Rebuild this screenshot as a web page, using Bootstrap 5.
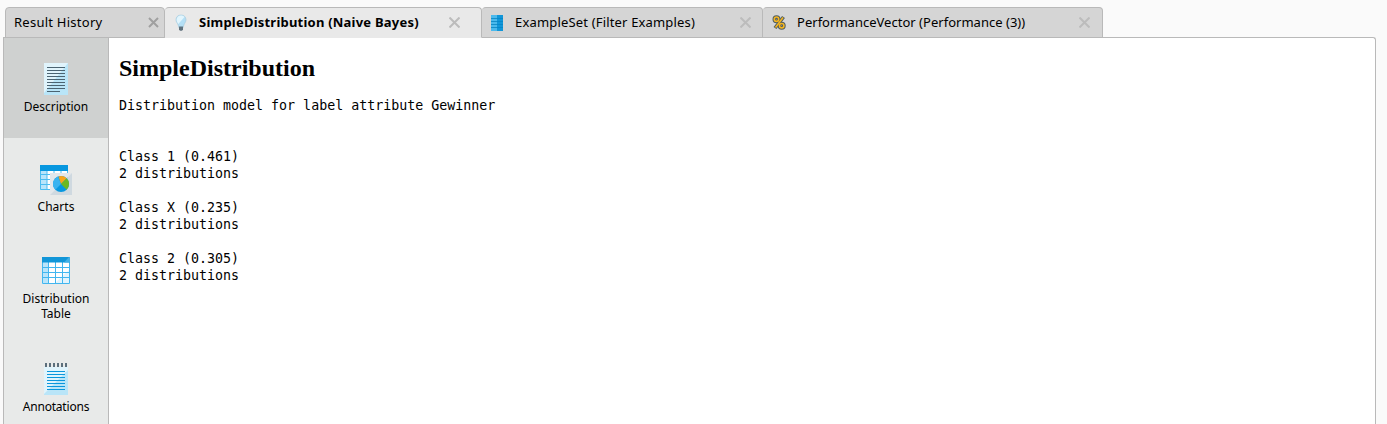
<!DOCTYPE html>
<html lang="en">
<head>
<meta charset="utf-8">
<meta name="viewport" content="width=device-width, initial-scale=1">
<title>Results</title>
<link rel="stylesheet" href="https://cdn.jsdelivr.net/npm/bootstrap@5.3.0/dist/css/bootstrap.min.css">
<style>
body{background:#fafafa;color:#000;font-family:"Noto Sans","Open Sans",sans-serif;font-size:12px;height:424px;overflow:hidden}
svg{display:block;flex:none}
.tabs{padding:7px 0 0 5px;height:37px}
.result-tab{height:31px;border:1px solid #b9b9b9;border-left-width:0;border-radius:4px 4px 0 0;background:#d5d5d5;font-size:13px;line-height:26px;white-space:nowrap;position:relative}
.result-tab span{padding-bottom:2px}
.result-tab:first-child{border-left-width:1px}
.result-tab.active{background:#e9e9e9;border-bottom-color:#e9e9e9;font-weight:700;letter-spacing:.22px}
.t1{width:160px;padding:0 5px 0 8px;letter-spacing:.25px}
.t2{width:317px;padding:0 21px 0 9px}
.t3{width:281px;padding:0 11px 0 9px;letter-spacing:.17px}
.t4{width:340px;padding:0 12px 0 9px;letter-spacing:.02px}
.x{stroke:#a0a0a0;stroke-width:2;fill:none}
.x.dim{stroke:#bcbcbc}
.panel{margin-left:3px;width:1373px;height:387px;border:1px solid #b9b9b9;border-bottom:0;border-radius:0 3px 0 0;background:#fff}
.side{width:105px;background:#e8eae9;border-right:1px solid #b9b9b9;line-height:15px;text-align:center}
.side-item{padding-top:25px;height:100px}
.side-item.active{background:#cfd1d0}
.side-item svg{margin:0 auto 4px}
.side-item span{display:block}
.doc{padding:16px 0 0 10px}
.doc h1{font:700 24px/28px "Liberation Serif",serif;margin:0 0 15px}
.doc pre{font:13.3px/17px "DejaVu Sans Mono",monospace;margin:0;overflow:visible;color:#000}
</style>
</head>
<body>
<nav class="tabs d-flex" aria-label="Results">
  <div class="result-tab t1 d-flex align-items-center justify-content-between">
    <span>Result History</span>
    <svg width="11" height="11"><path class="x" d="M1 1L10 10M10 1L1 10"/></svg>
  </div>
  <div class="result-tab t2 active d-flex align-items-center">
    <svg width="16" height="18" viewBox="0 0 16 18"><path d="M7 1C3.800 1 2 3.200 2 5.800c0 2 1.300 3.200 2.200 5.200L4.800 13.500h4.400l.6-2.500c.9-2 2.200-3.200 2.200-5.200C12 3.200 10.200 1 7 1z" fill="#b4dff5" stroke="#a8cbdd" stroke-width=".7"/><path d="M7 1.500C4.300 1.500 2.600 3.500 2.600 5.800c0 1.500 1 2.800 1.700 4.200L10.500 3C9.600 2 8.500 1.500 7 1.500z" fill="#e2f5fd"/><path d="M5 12.500h4v3l-1 1.200H6L5 15.500z" fill="#60727e"/></svg>
    <span class="me-auto" style="margin-left:9px">SimpleDistribution (Naive Bayes)</span>
    <svg width="11" height="11"><path class="x dim" d="M.5 .5L10.500 10.500M10.500 .5L.5 10.500"/></svg>
  </div>
  <div class="result-tab t3 d-flex align-items-center">
    <svg width="12" height="16"><path fill="#4bb9ec" d="M0 0h6v16H0z"/><path fill="#1196d8" d="M6 0h6v16H6z"/><path d="M0 3.500h6M0 6.500h6M0 9.500h6M0 12.500h6" stroke="#168fc9"/><path d="M6 3.500h6M6 6.500h6M6 9.500h6M6 12.500h6" stroke="#0788ca"/></svg>
    <span class="me-auto" style="margin-left:12px">ExampleSet (Filter Examples)</span>
    <svg width="11" height="11"><path class="x dim" d="M.5 .5L10.500 10.500M10.500 .5L.5 10.500"/></svg>
  </div>
  <div class="result-tab t4 d-flex align-items-center">
    <svg width="14" height="16" viewBox="0 0 14 16"><g fill="none" stroke="#4f5d60" stroke-width="3.600"><circle cx="4.500" cy="4.200" r="2.200"/><circle cx="9.700" cy="10.700" r="2.200"/><path d="M11.500 2L3 13"/></g><g fill="none" stroke="#f5b51f" stroke-width="1.600"><circle cx="4.500" cy="4.200" r="2.200"/><circle cx="9.700" cy="10.700" r="2.200"/><path d="M11 2.500L3.500 12.500"/></g></svg>
    <span class="me-auto" style="margin-left:11px">PerformanceVector (Performance (3))</span>
    <svg width="11" height="11"><path class="x dim" d="M.5 .5L10.500 10.500M10.500 .5L.5 10.500"/></svg>
  </div>
</nav>
<main class="panel d-flex overflow-hidden">
  <aside class="side flex-shrink-0">
    <div class="side-item active">
      <svg width="24" height="32"><path fill="#b9e5f8" d="M0 0h24v32H0z"/><path fill="#e0f4fc" d="M0 0h24L0 30z"/><path d="M3 4.500h18M3 7.500h18M3 10.500h18M3 13.500h18M3 16.500h18M3 19.500h18M3 22.500h18M3 25.500h18M3 28.500h13" stroke="#4b6472"/></svg>
      <span>Description</span>
    </div>
    <div class="side-item">
      <svg width="32" height="32"><g transform="translate(0 1)"><path fill="#fff" d="M0 6h28v20H0z"/><path fill="#b9e5fb" d="M0 6h7v20H0z"/><path d="M.5 5v20.500H28M7 6v20M14 6v20M21 6v20M27.500 6v20M0 10.500h28M0 15.500h28M0 20.500h28" stroke="#4cbcf0" fill="none"/><path fill="#0797df" d="M0 1h28v6H0z"/><path fill="#e2e7eb" d="M10 9h22L10 31z"/><path fill="#cfd9e0" d="M32 9v22H10z"/><circle cx="21" cy="20" r="8" fill="#0798e0"/><path d="M21 20L15.300 25.700A8 8 0 0 1 18 12.600z" fill="#39b3f0"/><path d="M21 20L18.500 12.400A8 8 0 0 1 26.700 14.300z" fill="#f9a51a"/><path d="M21 20L26.700 14.300A8 8 0 0 1 26.700 25.700z" fill="#6cb820"/></g></svg>
      <span>Charts</span>
    </div>
    <div class="side-item" style="height:108px;padding-top:17px">
      <svg width="28" height="32"><path fill="#fff" d="M0 2h28v27H0z"/><path fill="#b9e5fb" d="M0 7h6v21H0z"/><path fill="#e2f4fd" d="M28 14v14H13z"/><path d="M.5 2v26.500h27V2M6.500 7v21M13.500 7v21M20.500 7v21M0 12.500h28M0 17.500h28M0 22.500h28" stroke="#42b6ef" fill="none"/><path fill="#1196d8" d="M0 2h28v5.500H0z"/><path fill="#42b0e5" d="M27 2h1v5.500h-6z"/></svg>
      <span>Distribution<br>Table</span>
    </div>
    <div class="side-item" style="padding-top:17px">
      <svg width="24" height="32"><path fill="#b9e5f8" d="M0 4h24v28H0z"/><path fill="#e0f4fc" d="M0 4h24v3L0 31z"/><path d="M2 0v4M6 0v4M10 0v4M14 0v4M18 0v4M22 0v4" stroke="#5c6f7c" stroke-width="2"/><path d="M3 8.500h18M3 11.500h18M3 14.500h18M3 17.500h18M3 20.500h18M3 23.500h18M3 26.500h18" stroke="#0b97dc"/></svg>
      <span style="letter-spacing:-.2px">Annotations</span>
    </div>
  </aside>
  <article class="doc">
    <h1>SimpleDistribution</h1>
<pre>Distribution model for label attribute Gewinner


Class 1 (0.461)
2 distributions

Class X (0.235)
2 distributions

Class 2 (0.305)
2 distributions</pre>
  </article>
</main>
<script src="https://cdn.jsdelivr.net/npm/bootstrap@5.3.0/dist/js/bootstrap.bundle.min.js"></script>
</body>
</html>
